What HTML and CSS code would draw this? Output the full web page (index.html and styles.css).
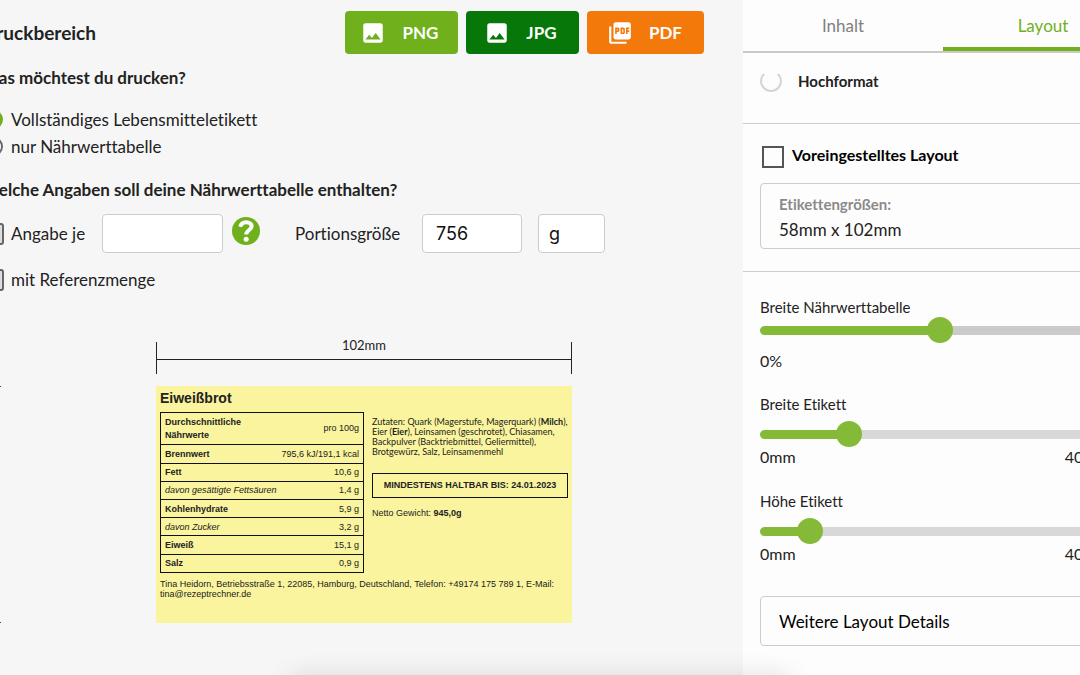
FILE: index.html
```html
<!DOCTYPE html>
<html lang="de">
<head>
<meta charset="utf-8">
<meta name="viewport" content="width=device-width, initial-scale=1">
<title>Druckbereich</title>
<link rel="stylesheet" href="styles.css">
</head>
<body>
<div class="app">
  <main class="print">
    <header class="print-head">
      <h1>Druckbereich</h1>
      <div class="exports">
        <button class="export png" type="button">
          <svg viewBox="0 0 24 24" aria-hidden="true"><path d="M21 19V5c0-1.100-.9-2-2-2H5c-1.100 0-2 .9-2 2v14c0 1.100.9 2 2 2h14c1.100 0 2-.9 2-2zM8.500 13.500l2.500 3.010L14.500 12l4.500 6H5l3.500-4.500z"/></svg>
          <span>PNG</span>
        </button>
        <button class="export jpg" type="button">
          <svg viewBox="0 0 24 24" aria-hidden="true"><path d="M21 19V5c0-1.100-.9-2-2-2H5c-1.100 0-2 .9-2 2v14c0 1.100.9 2 2 2h14c1.100 0 2-.9 2-2zM8.500 13.500l2.500 3.010L14.500 12l4.500 6H5l3.500-4.500z"/></svg>
          <span>JPG</span>
        </button>
        <button class="export pdf" type="button">
          <svg viewBox="0 0 24 24" aria-hidden="true"><path d="M20 2H8c-1.100 0-2 .9-2 2v12c0 1.100.9 2 2 2h12c1.100 0 2-.9 2-2V4c0-1.100-.9-2-2-2zm-8.500 7.500c0 .83-.67 1.500-1.500 1.500H9v2H7.500V7H10c.83 0 1.500.67 1.500 1.500v1zm5 2c0 .83-.67 1.500-1.500 1.500h-2.500V7H15c.83 0 1.500.67 1.500 1.500v3zm4-3H19v1h1.500V11H19v2h-1.500V7h3v1.500zM9 9.500h1v-1H9v1zM4 6H2v14c0 1.100.9 2 2 2h14v-2H4V6zm10 5.500h1v-3h-1v3z"/></svg>
          <span>PDF</span>
        </button>
      </div>
    </header>

    <h2>Was möchtest du drucken?</h2>
    <div class="choices">
      <label class="choice"><input type="radio" name="what" checked> Vollständiges Lebensmitteletikett</label>
      <label class="choice"><input type="radio" name="what"> nur Nährwerttabelle</label>
    </div>

    <h2 class="second">Welche Angaben soll deine Nährwerttabelle enthalten?</h2>
    <div class="fields">
      <label class="choice per"><input type="checkbox"> Angabe je</label>
      <input class="box amount" type="text" aria-label="Angabe je">
      <button class="help" type="button" aria-label="Hilfe">
        <svg viewBox="0 0 28 28" aria-hidden="true"><circle cx="14" cy="14" r="14" fill="#6fb01c"/><path d="M8.200 9.800C9 6.600 11.300 5.300 14.200 5.300c3.300 0 5.400 1.600 5.400 4.100 0 3.700-5.400 3.600-5.400 8.200" fill="none" stroke="#fff" stroke-width="4"/><circle cx="14.200" cy="22.200" r="2.500" fill="#fff"/></svg>
      </button>
      <label class="portion-label" for="portion">Portionsgröße</label>
      <input class="box portion" id="portion" type="text" value="756">
      <select class="box unit" aria-label="Einheit"><option>g</option></select>
    </div>
    <label class="choice reference"><input type="checkbox"> mit Referenzmenge</label>

    <div class="preview">
      <div class="ruler-y"></div>
      <div class="sheet">
        <div class="ruler-x"><span>102mm</span></div>
        <article class="food-label">
          <h3>Eiweißbrot</h3>
          <div class="food-columns">
            <table>
              <tr class="first"><th>Durchschnittliche<br>Nährwerte</th><td>pro 100g</td></tr>
              <tr><th>Brennwert</th><td>795,6 kJ/191,1 kcal</td></tr>
              <tr><th>Fett</th><td>10,6 g</td></tr>
              <tr class="sub"><th>davon gesättigte Fettsäuren</th><td>1,4 g</td></tr>
              <tr><th>Kohlenhydrate</th><td>5,9 g</td></tr>
              <tr class="sub"><th>davon Zucker</th><td>3,2 g</td></tr>
              <tr><th>Eiweiß</th><td>15,1 g</td></tr>
              <tr><th>Salz</th><td>0,9 g</td></tr>
            </table>
            <div class="facts">
              <p class="ingredients">Zutaten: Quark (Magerstufe, Magerquark) (<b>Milch</b>), Eier (<b>Eier</b>), Leinsamen (geschrotet), Chiasamen, Backpulver (Backtriebmittel, Geliermittel), Brotgewürz, Salz, Leinsamenmehl</p>
              <p class="best-before">MINDESTENS HALTBAR BIS: 24.01.2023</p>
              <p>Netto Gewicht: <b>945,0g</b></p>
            </div>
          </div>
          <p class="address">Tina Heidorn, Betriebsstraße 1, 22085, Hamburg, Deutschland, Telefon: +49174 175 789 1, E-Mail: tina@rezeptrechner.de</p>
        </article>
      </div>
    </div>
  </main>

  <aside class="panel">
    <nav class="tabs">
      <button class="tab" type="button">Inhalt</button>
      <button class="tab active" type="button">Layout</button>
    </nav>
    <section class="format">
      <label><input type="radio" name="format"> Hochformat</label>
    </section>
    <section class="preset">
      <label class="preset-toggle"><input type="checkbox"> Voreingestelltes Layout</label>
      <div class="size-box">
        <label for="size">Etikettengrößen:</label>
        <select id="size"><option>58mm x 102mm</option></select>
      </div>
    </section>
    <section class="sizes">
      <div class="slider table-width">
        <label for="table-width">Breite Nährwerttabelle</label>
        <input id="table-width" type="range" min="0" max="100" value="50" style="--fill: 50%">
        <div class="limits"><span>0%</span></div>
      </div>
      <div class="slider">
        <label for="label-width">Breite Etikett</label>
        <input id="label-width" type="range" min="0" max="400" value="91" style="--fill: 25%">
        <div class="limits"><span>0mm</span><span>400mm</span></div>
      </div>
      <div class="slider">
        <label for="label-height">Höhe Etikett</label>
        <input id="label-height" type="range" min="0" max="400" value="44" style="--fill: 14%">
        <div class="limits"><span>0mm</span><span>400mm</span></div>
      </div>
      <button class="more" type="button">Weitere Layout Details</button>
    </section>
  </aside>
</div>
<div class="edge-shadow"></div>
</body>
</html>
```
FILE: styles.css
```css
* {
  box-sizing: border-box;
}

body {
  margin: 0;
  overflow: hidden;
  background: #f6f6f6;
  color: #222;
  font-family: Lato, sans-serif;
  font-size: 17px;
  font-variant-ligatures: none;
}

h1, h2, h3, p {
  margin: 0;
}

button, input, select {
  font: inherit;
  font-variant-ligatures: none;
  color: inherit;
}

input {
  margin: 0;
}

/* The work area is wider than the window and scrolled sideways. */
.app {
  display: flex;
  min-height: 100vh;
  margin: 0 -63px 0 -18px;
}

.print {
  flex: 1;
  min-width: 0;
}

.print-head {
  display: flex;
  align-items: center;
  justify-content: space-between;
  padding: 11px 39px 0 0;
}

h1 {
  font-size: 19px;
  line-height: 24px;
}

h2 {
  margin-top: 13px;
  font-size: 17px;
  line-height: 22px;
}

h2.second {
  margin-top: 19px;
}

.exports {
  display: flex;
  gap: 8px;
}

.export {
  display: flex;
  align-items: center;
  justify-content: center;
  gap: 16px;
  min-width: 113px;
  height: 43px;
  padding: 0 19px 0 15px;
  border: 0;
  border-radius: 4px;
  color: #fff;
  font-size: 17px;
  font-weight: 700;
}

.export svg {
  width: 26px;
  height: 26px;
  fill: #fff;
}

.png { background: #6fb01c; }
.jpg { background: #08770a; }
.pdf { background: #f4790b; padding: 0 22px 0 20px; }

.choices {
  display: flex;
  flex-direction: column;
  margin-top: 17px;
}

.choice {
  display: flex;
  align-items: center;
  gap: 7px;
  line-height: 27px;
}

.choice input {
  flex: none;
  appearance: none;
  width: 22px;
  height: 22px;
  border: 2px solid #666;
  border-radius: 3px;
  background: #ddd;
}

.choice input[type="radio"] {
  width: 19px;
  height: 19px;
  margin: 0 1px 0 2px;
  border-radius: 50%;
  background: #fff;
}

.choice input[type="radio"]:checked {
  border-color: #6fb01c;
  background: #6fb01c;
}

.fields {
  display: flex;
  align-items: center;
  margin-top: 13px;
}

.box {
  height: 39px;
  padding: 0 13px;
  border: 1px solid #ccc;
  border-radius: 4px;
  background: #fff;
  color: #111;
  font-family: Inter, sans-serif;
  font-size: 18px;
}

.amount {
  width: 121px;
}

.per {
  width: 120px;
}

.help {
  width: 28px;
  height: 28px;
  margin: 0 35px 6px 9px;
  padding: 0;
  border: 0;
  background: none;
}

.help svg {
  display: block;
}

.portion-label {
  width: 127px;
}

.portion {
  width: 100px;
  margin-right: 16px;
}

.unit {
  width: 67px;
  padding: 0 10px;
  appearance: none;
}

.reference {
  margin-top: 13px;
}

.preview {
  display: flex;
  align-items: flex-end;
  gap: 155px;
  margin-top: 49px;
}

.ruler-y {
  width: 19px;
  height: 237px;
  border: solid #444;
  border-width: 1px 0;
}

.sheet {
  width: 416px;
}

.ruler-x {
  position: relative;
  display: flex;
  justify-content: center;
  height: 32px;
  border: solid #222;
  border-width: 0 1px;
  font-size: 13px;
  line-height: 18px;
}

.ruler-x::before {
  content: "";
  position: absolute;
  inset: 17px 0 auto;
  border-top: 1px solid #222;
}

.ruler-x span {
  margin-top: -6px;
}

.food-label {
  min-height: 237px;
  margin-top: 12px;
  padding: 4px;
  background: #f9f49d;
  font-family: "Liberation Sans", sans-serif;
  font-size: 9px;
  line-height: 10px;
}

.food-label h3 {
  font-size: 14px;
  line-height: 17px;
}

.food-columns {
  display: flex;
  align-items: flex-start;
  gap: 8px;
  margin-top: 5px;
}

.food-label table {
  flex: none;
  width: 204px;
  height: 161px;
  border-collapse: collapse;
  border: 1px solid #111;
}

.food-label tr {
  height: 18px;
  border-top: 1px solid #111;
}

.food-label .first {
  height: 32px;
  line-height: 13px;
}

.food-label th {
  padding: 0 0 0 4px;
  text-align: left;
  white-space: nowrap;
}

.food-label td {
  padding: 0 4px;
  text-align: right;
  white-space: nowrap;
}

.food-label .sub th {
  font-style: italic;
  font-weight: 400;
}

.facts {
  flex: 1;
  padding-top: 5px;
}

.ingredients {
  font-family: Lato, sans-serif;
}

.best-before {
  margin: 16px 0 10px;
  padding: 6px 0 7px;
  border: 1px solid #111;
  font-weight: 700;
  text-align: center;
}

.address {
  margin-top: 6px;
}

.panel {
  flex: none;
  width: 400px;
  background: #fdfdfd;
}

.tabs {
  display: flex;
  height: 53px;
  border-bottom: 2px solid #c9c9c9;
}

.tab {
  flex: 1;
  padding: 0;
  border: 0;
  background: none;
  color: #808080;
}

.tab.active {
  border-bottom: 4px solid #6fb01c;
  padding-top: 4px;
  color: #6fb01c;
}

.panel section {
  padding: 0 18px 0 17px;
}

.panel .format,
.panel .preset {
  border-bottom: 1px solid #ccc;
}

.panel .format {
  padding-top: 17px;
  padding-bottom: 31px;
}

.format label {
  display: flex;
  align-items: center;
  gap: 16px;
  font-size: 15px;
  font-weight: 700;
  line-height: 20px;
}

.format input {
  appearance: none;
  width: 22px;
  height: 22px;
  border: 2px solid #d4d4d4;
  border-radius: 50%;
  clip-path: inset(4px 0 0 0);
}

.panel .preset {
  padding-top: 22px;
  padding-bottom: 22px;
}

.preset-toggle {
  display: flex;
  align-items: flex-start;
  gap: 8px;
  padding-left: 2px;
  color: #000;
  font-size: 16px;
  font-weight: 700;
  line-height: 18px;
}

.preset-toggle input {
  appearance: none;
  width: 22px;
  height: 22px;
  border: 2px solid #555;
}

.size-box {
  display: flex;
  flex-direction: column;
  margin-top: 15px;
  padding: 8px 18px 6px;
  border: 1px solid #ccc;
  border-radius: 4px;
}

.size-box label {
  color: #8a8a8a;
  font-size: 15px;
  font-weight: 700;
  line-height: 24px;
}

.size-box select {
  appearance: none;
  height: 26px;
  padding: 0;
  border: 0;
  background: none;
}

.panel .sizes {
  padding-top: 25px;
}

.slider {
  display: flex;
  flex-direction: column;
  margin-bottom: 24px;
}

.slider label {
  font-size: 15px;
  line-height: 20px;
}

.slider input {
  --track: #d8d8d8;
  appearance: none;
  width: 360px;
  height: 26px;
  margin-top: 7px;
  background: none;
}

.slider input::-webkit-slider-runnable-track {
  height: 9px;
  border-radius: 5px;
  background: linear-gradient(to right, #84ba38 var(--fill), var(--track) var(--fill));
}

.slider input::-webkit-slider-thumb {
  appearance: none;
  width: 26px;
  height: 26px;
  margin-top: -9px;
  border-radius: 50%;
  background: #84ba38;
}

.limits {
  display: flex;
  justify-content: space-between;
  padding-right: 6px;
  font-size: 16px;
  line-height: 20px;
}

.slider.table-width {
  margin-bottom: 23px;
}

.table-width input {
  --track: #cbcbcb;
  margin-top: 0;
}

.table-width .limits {
  margin-top: 8px;
}

.more {
  width: 100%;
  height: 50px;
  margin-top: 8px;
  padding: 0 18px;
  border: 1px solid #ccc;
  border-radius: 4px;
  background: none;
  color: #000;
  text-align: left;
}

.edge-shadow {
  position: fixed;
  top: 100%;
  left: 290px;
  right: 290px;
  height: 20px;
  box-shadow: 0 0 24px rgba(0, 0, 0, 0.12);
}
```
